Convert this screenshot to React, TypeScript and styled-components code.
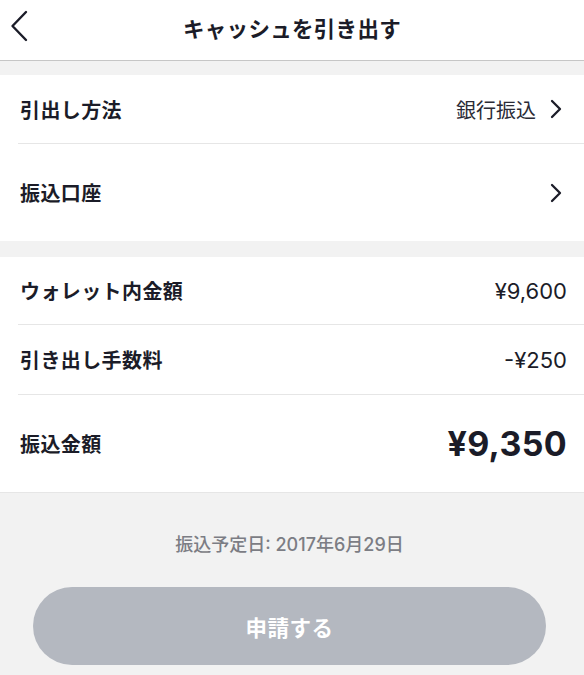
import styled, { createGlobalStyle } from "styled-components";

const GlobalStyle = createGlobalStyle`
  *, *::before, *::after {
    box-sizing: border-box;
  }
  html, body {
    margin: 0;
    padding: 0;
    background: #f2f2f2;
  }
  body {
    font-family: "Inter", "Noto Sans CJK JP", sans-serif;
    color: #1b1c28;
  }
`;

const BackIcon = () => (
  <svg width="18" height="32" viewBox="0 0 18 32" fill="none">
    <path
      d="M16 2L2.5 16L16 30"
      stroke="#1b1c28"
      strokeWidth="2.4"
      strokeLinecap="round"
      strokeLinejoin="round"
    />
  </svg>
);

const NextIcon = () => (
  <svg width="12" height="20" viewBox="0 0 12 20" fill="none">
    <path
      d="M2 2L10 10L2 18"
      stroke="#1b1c28"
      strokeWidth="2.3"
      strokeLinecap="round"
      strokeLinejoin="round"
    />
  </svg>
);

const App = () => {
  return (
    <Page.Container>
      <GlobalStyle />
      <Page.Header>
        <Page.Back>
          <BackIcon />
        </Page.Back>
        <Page.Title>キャッシュを引き出す</Page.Title>
      </Page.Header>

      <Page.Section $gap={14}>
        <Page.Row $height={69}>
          <Page.Label>引出し方法</Page.Label>
          <Page.Value>
            銀行振込
            <NextIcon />
          </Page.Value>
        </Page.Row>
        <Page.Row $height={98}>
          <Page.Label>振込口座</Page.Label>
          <Page.Value>
            <NextIcon />
          </Page.Value>
        </Page.Row>
      </Page.Section>

      <Page.Section $gap={16}>
        <Page.Row $height={68}>
          <Page.Label>ウォレット内金額</Page.Label>
          <Page.Amount>¥9,600</Page.Amount>
        </Page.Row>
        <Page.Row $height={70}>
          <Page.Label>引き出し手数料</Page.Label>
          <Page.Amount>-¥250</Page.Amount>
        </Page.Row>
        <Page.Row $height={98}>
          <Page.Label>振込金額</Page.Label>
          <Page.Total>¥9,350</Page.Total>
        </Page.Row>
      </Page.Section>

      <Page.Footer>
        <Page.Note>振込予定日: 2017年6月29日</Page.Note>
        <Page.Submit disabled>申請する</Page.Submit>
      </Page.Footer>
    </Page.Container>
  );
};

export default App;

const Page = {
  Container: styled.div`
    width: 584px;
    min-height: 675px;
    background: #f2f2f2;
  `,
  Header: styled.div`
    position: relative;
    height: 61px;
    background: #fff;
    border-bottom: 1px solid #c6c6c6;
    display: flex;
    align-items: center;
    justify-content: center;
  `,
  Back: styled.div`
    position: absolute;
    left: 10px;
    top: 10px;
    display: flex;
  `,
  Title: styled.h1`
    margin: 0;
    font-size: 21.5px;
    font-weight: 700;
    letter-spacing: 0.3px;
    padding-bottom: 6px;
  `,
  Section: styled.div<{ $gap: number }>`
    background: #fff;
    margin-top: ${(p) => p.$gap}px;
    padding-left: 18px;
  `,
  Row: styled.div<{ $height: number }>`
    height: ${(p) => p.$height}px;
    display: flex;
    align-items: center;
    justify-content: space-between;
    padding-right: 17px;
    padding-left: 2px;
    border-bottom: 1px solid #e6e6e6;
    &:last-child {
      border-bottom: none;
      height: ${(p) => p.$height - 1}px;
    }
  `,
  Label: styled.span`
    font-size: 20px;
    font-weight: 700;
    letter-spacing: 0.4px;
  `,
  Value: styled.span`
    display: flex;
    align-items: center;
    gap: 14px;
    font-size: 20px;
    font-weight: 400;
    color: #2a2b36;
    padding-right: 5px;
  `,
  Amount: styled.span`
    font-size: 22px;
    font-weight: 400;
  `,
  Total: styled.span`
    font-size: 34px;
    font-weight: 700;
    letter-spacing: 0.3px;
  `,
  Footer: styled.div`
    border-top: 1px solid #e6e6e6;
    display: flex;
    flex-direction: column;
    align-items: center;
    padding: 39px 5px 0 0;
  `,
  Note: styled.div`
    font-size: 18px;
    line-height: 26px;
    font-weight: 500;
    color: #7c7d84;
  `,
  Submit: styled.button`
    margin-top: 29px;
    width: 513px;
    height: 78px;
    border: none;
    border-radius: 39px;
    background: #b4b8c0;
    color: #fff;
    font-family: "Inter", "Noto Sans CJK JP", sans-serif;
    font-size: 21.5px;
    font-weight: 700;
    letter-spacing: 0.5px;
  `,
};
